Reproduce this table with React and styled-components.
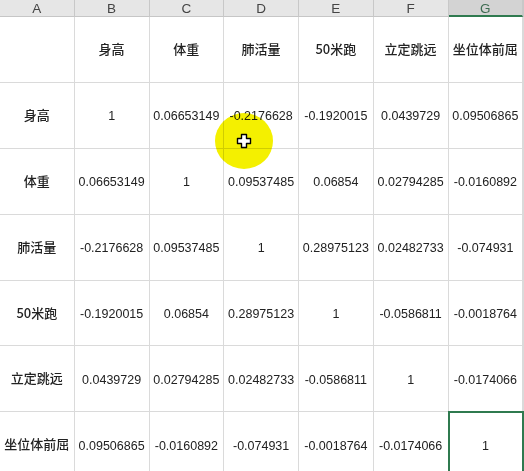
import React from "react";
import styled, { createGlobalStyle } from "styled-components";

const Global = createGlobalStyle`
  html, body { margin: 0; padding: 0; background: #fff; overflow: hidden; }
  #root { width: 524px; height: 471px; overflow: hidden; position: relative; }
`;

const Sheet = styled.div`
  display: grid;
  grid-template-columns: repeat(7, 74.75px) 1fr;
  grid-template-rows: 17px repeat(7, 65.9px);
  width: 524px;
  background: #fff;
  font-family: "Liberation Sans", Arial, "Noto Sans CJK SC", sans-serif;
`;

const ColHead = styled.div`
  display: flex;
  align-items: center;
  justify-content: center;
  background: ${(p) => (p.$selected ? "#d3d3d3" : "#e6e6e6")};
  color: ${(p) => (p.$selected ? "#3d6b50" : "#444")};
  font-size: 13.5px;
  border-right: 1px solid #c8c8c8;
  border-bottom: ${(p) => (p.$selected ? "2px solid #2f7a4f" : "1px solid #c6c6c6")};
  box-sizing: border-box;
  padding-top: 1px;
`;

const Cell = styled.div`
  position: relative;
  display: flex;
  align-items: center;
  justify-content: center;
  box-sizing: border-box;
  border-right: 1px solid #dadada;
  border-bottom: 1px solid #dadada;
  color: #222;
  font-size: ${(p) => (p.$label ? "13px" : "12.5px")};
  font-weight: ${(p) => (p.$label ? 500 : 400)};
  font-family: ${(p) =>
    p.$label
      ? '"Noto Sans CJK SC", "Liberation Sans", sans-serif'
      : '"Liberation Sans", Arial, sans-serif'};
  padding: ${(p) => (p.$label ? "0 0 2px" : "2px 0 0")};
  white-space: nowrap;
  outline: ${(p) => (p.$selected ? "2px solid #2f7a4f" : "none")};
  outline-offset: -1px;
  z-index: ${(p) => (p.$selected ? 1 : 0)};
`;

const Highlight = styled.div`
  position: absolute;
  left: 215px;
  top: 113px;
  width: 58px;
  height: 56px;
  border-radius: 50%;
  background: #f4f000;
  mix-blend-mode: multiply;
  pointer-events: none;
  z-index: 5;
`;

const CursorBox = styled.div`
  position: absolute;
  left: 236px;
  top: 133px;
  width: 16px;
  height: 16px;
  z-index: 6;
  pointer-events: none;
`;

const headers = ["A", "B", "C", "D", "E", "F", "G", ""];
const names = ["身高", "体重", "肺活量", "50米跑", "立定跳远", "坐位体前屈"];
const data = [
  ["1", "0.06653149", "-0.2176628", "-0.1920015", "0.0439729", "0.09506865"],
  ["0.06653149", "1", "0.09537485", "0.06854", "0.02794285", "-0.0160892"],
  ["-0.2176628", "0.09537485", "1", "0.28975123", "0.02482733", "-0.074931"],
  ["-0.1920015", "0.06854", "0.28975123", "1", "-0.0586811", "-0.0018764"],
  ["0.0439729", "0.02794285", "0.02482733", "-0.0586811", "1", "-0.0174066"],
  ["0.09506865", "-0.0160892", "-0.074931", "-0.0018764", "-0.0174066", "1"],
];

const Cursor = () => (
  <svg width="16" height="16" viewBox="0 0 16 16">
    <path
      d="M5.5 1.5h5v4h4v5h-4v4h-5v-4h-4v-5h4z"
      fill="#fff"
      stroke="#000"
      strokeWidth="1.4"
      strokeLinejoin="round"
    />
  </svg>
);

export default function App() {
  return (
    <>
      <Global />
      <Sheet>
        {headers.map((h, i) => (
          <ColHead key={"h" + i} $selected={h === "G"}>
            {h}
          </ColHead>
        ))}
        <Cell />
        {names.map((n) => (
          <Cell key={"t" + n} $label>
            {n}
          </Cell>
        ))}
        <Cell />
        {names.map((n, r) => (
          <React.Fragment key={"r" + r}>
            <Cell $label>{n}</Cell>
            {data[r].map((v, c) => (
              <Cell key={c} $selected={r === 5 && c === 5}>
                {v}
              </Cell>
            ))}
            <Cell />
          </React.Fragment>
        ))}
      </Sheet>
      <Highlight />
      <CursorBox>
        <Cursor />
      </CursorBox>
    </>
  );
}
